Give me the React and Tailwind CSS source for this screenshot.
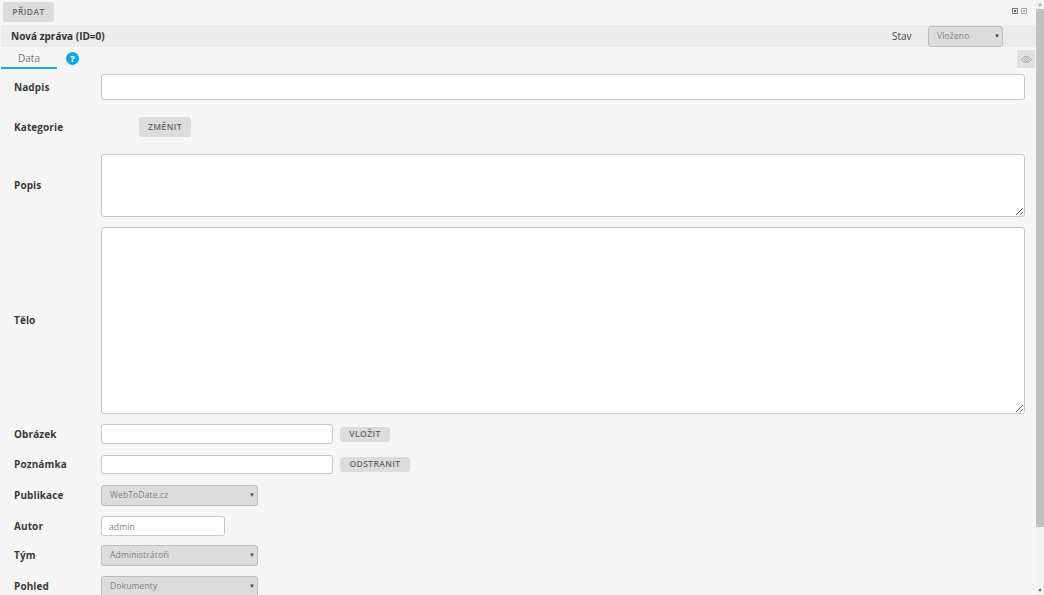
import React from "react";

const font = "font-['Open_Sans',sans-serif]";

const Label = ({ children, className = "" }) => (
  <div className={`w-[87px] shrink-0 text-[10px] font-bold text-[#3a3a3a] tracking-[0.1px] ${className}`}>
    {children}
  </div>
);

const Button = ({ children, className = "" }) => (
  <button className={`rounded-[3px] bg-[#dcdcdc] text-[8.5px] font-semibold tracking-[0.4px] text-[#666] ${className}`}>
    {children}
  </button>
);

const Select = ({ value, className = "" }) => (
  <div className={`flex items-center justify-between rounded-[3px] border border-[#bdbdbd] bg-[#dcdcdc] text-[8.5px] tracking-[0.15px] text-[#808080] ${className}`}>
    <span>{value}</span>
    <span className="text-[6px] text-[#444]">▼</span>
  </div>
);

const inputCls = "block rounded-[3px] border border-[#c8c8c8] bg-white outline-none";

const Row = ({ label, className = "", children }) => (
  <div className={`flex items-center pl-[14px] ${className}`}>
    <Label>{label}</Label>
    {children}
  </div>
);

const Scrollbar = () => (
  <div className="flex h-full w-[8px] shrink-0 flex-col items-center bg-[#f1f1f1]">
    <div className="flex h-[9px] items-center text-[5px] leading-none text-[#999]">▲</div>
    <div className="h-[518px] w-full bg-[#c1c1c1]" />
    <div className="flex-1" />
    <div className="flex h-[9px] items-center text-[5px] leading-none text-[#444]">▼</div>
  </div>
);

export default function App() {
  return (
    <div className={`flex h-[595px] w-[1044px] overflow-hidden bg-[#f5f5f5] ${font}`}>
      <div className="min-w-0 flex-1 overflow-hidden">
        {/* Top toolbar */}
        <div className="flex h-[25px] items-start justify-between pl-[3px] pr-[9px] pt-[2px]">
          <Button className="h-[20px] w-[51px]">PŘIDAT</Button>
          <div className="mt-[6px] flex gap-[3px]">
            <div className="flex h-[6px] w-[6px] items-center justify-center border border-[#777] bg-[#eee]">
              <div className="h-[2px] w-[2px] bg-[#666]" />
            </div>
            <div className="flex h-[6px] w-[6px] items-center justify-center border border-[#aaa] bg-[#f5f5f5]">
              <div className="h-[2px] w-[2px] bg-[#aaa]" />
            </div>
          </div>
        </div>

        {/* Header */}
        <div className="ml-[1px] flex h-[22px] items-center bg-[#ebebeb] pl-[10px]">
          <div className="flex-1 text-[10px] font-bold text-[#333]">Nová zpráva (ID=0)</div>
          <div className="w-[36px] text-[10px] text-[#444]">Stav</div>
          <Select value="Vloženo" className="mr-[33px] h-[21px] w-[75px] pl-[8px] pr-[2px]" />
        </div>

        {/* Tabs */}
        <div className="flex h-[22px] items-start">
          <div className="ml-[1px] flex h-[22px] w-[56px] items-center justify-center border-b-2 border-[#1ea7e8] pt-[3px] text-[10px] text-[#777]">
            Data
          </div>
          <div className="ml-[9px] mt-[5px] flex h-[13px] w-[13px] items-center justify-center rounded-full bg-[#0ea5e9] text-[9px] font-extrabold text-white">
            ?
          </div>
          <div className="ml-auto mr-[1px] mt-[3px] flex h-[18px] w-[18px] items-center justify-center bg-[#e0e0e0]">
            <svg width="11" height="7" viewBox="0 0 12 8" fill="none" stroke="#999" strokeWidth="0.8">
              <path d="M0.5 4C2 1.6 4 .5 6 .5s4 1.1 5.5 3.5C10 6.4 8 7.5 6 7.5S2 6.4.5 4z" />
              <circle cx="6" cy="4" r="2" />
            </svg>
          </div>
        </div>

        {/* Form */}
        <div className="pt-[5px] pr-[11px]">
          <Row label="Nadpis">
            <input className={`${inputCls} h-[26px] flex-1`} />
          </Row>
          <Row label="Kategorie" className="mt-[17px]">
            <Button className="ml-[38px] h-[20px] w-[52px]">ZMĚNIT</Button>
          </Row>
          <Row label="Popis" className="mt-[17px]">
            <textarea className={`${inputCls} h-[63px] flex-1`} />
          </Row>
          <Row label="Tělo" className="mt-[10px]">
            <textarea className={`${inputCls} h-[187px] flex-1`} />
          </Row>
          <Row label="Obrázek" className="mt-[10px]">
            <input className={`${inputCls} h-[20px] w-[232px]`} />
            <Button className="ml-[7px] h-[15px] w-[50px]">VLOŽIT</Button>
          </Row>
          <Row label="Poznámka" className="mt-[11px]">
            <input className={`${inputCls} h-[19px] w-[232px]`} />
            <Button className="ml-[7px] h-[15px] w-[70px]">ODSTRANIT</Button>
          </Row>
          <Row label="Publikace" className="mt-[11px]">
            <Select value="WebToDate.cz" className="h-[21px] w-[157px] pl-[8px] pr-[2px]" />
          </Row>
          <Row label="Autor" className="mt-[10px]">
            <input
              readOnly
              value="admin"
              className={`${inputCls} h-[20px] w-[124px] pl-[7px] text-[8.5px] tracking-[0.15px] text-[#808080]`}
            />
          </Row>
          <Row label="Tým" className="mt-[9px]">
            <Select value="Administrátoři" className="h-[21px] w-[157px] pl-[8px] pr-[2px]" />
          </Row>
          <Row label="Pohled" className="mt-[10px]">
            <Select value="Dokumenty" className="h-[21px] w-[157px] pl-[8px] pr-[2px]" />
          </Row>
        </div>
      </div>
      <Scrollbar />
    </div>
  );
}
